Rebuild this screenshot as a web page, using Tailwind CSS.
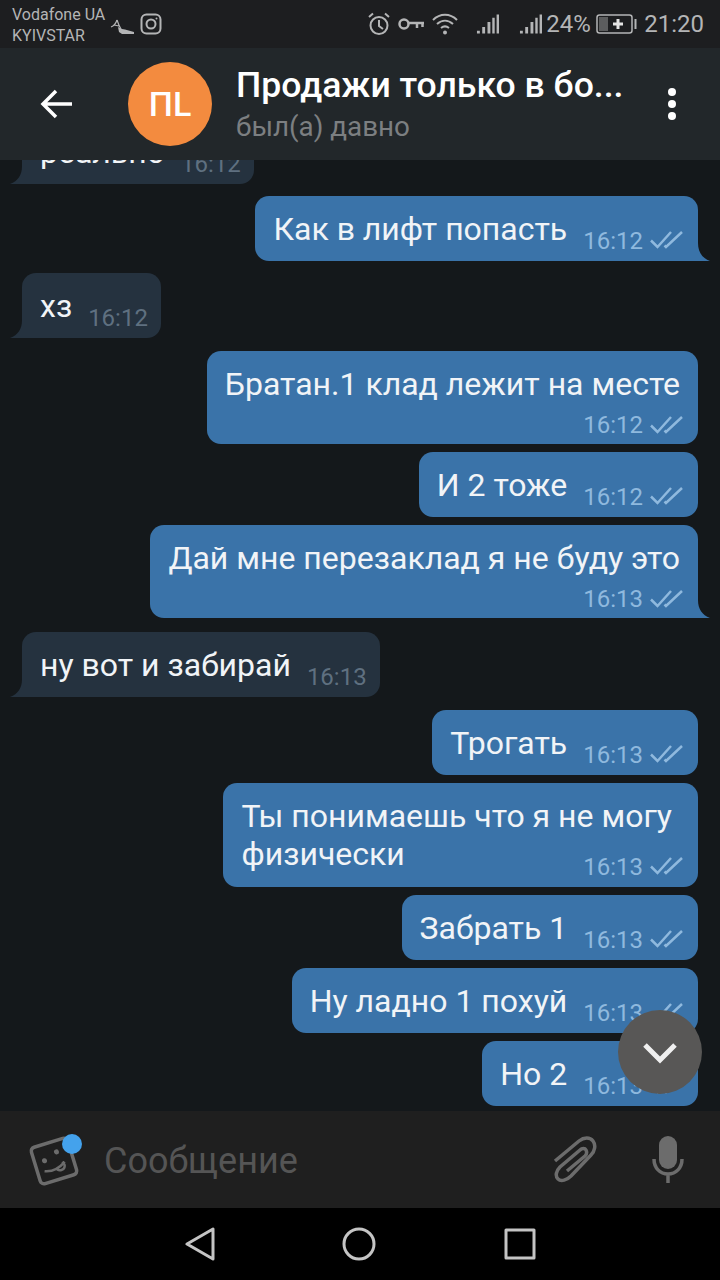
<!DOCTYPE html>
<html lang="en">

<head>
    <meta charset="UTF-8" />
    <meta name="viewport" content="width=device-width, initial-scale=1.0">
    <title>Chat</title>
    <script src="https://cdn.jsdelivr.net/npm/@tailwindcss/browser@4"></script>
</head>

<body class="bg-black">
    <!-- shared icons -->
    <svg class="hidden">
        <symbol id="checks" viewBox="0 0 33 18">
            <path d="M1 9.500l6.500 6.500L21 1M14.500 14.500l1.500 1.500L32 1" fill="none" stroke="currentColor" stroke-width="2.500" />
        </symbol>
        <symbol id="bars" viewBox="0 0 24 22">
            <path d="M1 18h3v3H1zM6.500 14h3v7h-3zM12 9h3v12h-3zM17 4.500h2.500V21H17zM21.500 1H24v20h-2.500z" fill="currentColor" />
        </symbol>
        <symbol id="tail-out" viewBox="0 0 12 18">
            <path d="M0 0C0 9 4 15 12 18H0z" fill="currentColor" />
        </symbol>
        <symbol id="tail-in" viewBox="0 0 12 18">
            <path d="M12 0C12 9 8 15 0 18H12z" fill="currentColor" />
        </symbol>
    </svg>

    <div class="w-[720px] h-[1280px] flex flex-col overflow-hidden font-['Roboto',sans-serif] bg-[#14181b]">

        <!-- Status bar -->
        <div class="h-[48px] shrink-0 bg-[#1d1e20] flex items-center text-[#b4b5b6] pl-[12px] pr-[16px]">
            <div class="text-[16px] leading-[21px] w-[96px] pt-[1px]">
                <div>Vodafone UA</div>
                <div>KYIVSTAR</div>
            </div>
            <svg class="w-[26px] h-[20px] ml-[1px] mt-[4px]" viewBox="0 0 26 20" fill="none" stroke="currentColor">
                <path d="M2 11c3-1 5-4 6-7M8 4c1 3 2 6 4 9M5 9l5 1" stroke-width="1.200" />
                <path d="M9 11l4 2 3 .500 9 2.500v2H13l-3-2z" fill="currentColor" stroke="none" />
            </svg>
            <svg class="w-[22px] h-[22px] ml-[5px]" viewBox="0 0 22 22" fill="none" stroke="currentColor" stroke-width="2">
                <rect x="1.500" y="1.500" width="19" height="19" rx="5" />
                <circle cx="11" cy="11" r="4.500" />
                <circle cx="16.500" cy="5.500" r="1" fill="currentColor" stroke="none" />
            </svg>
            <div class="flex-1"></div>
            <svg class="w-[22px] h-[24px]" viewBox="0 0 22 24" fill="none" stroke="currentColor" stroke-width="2">
                <circle cx="11" cy="13.500" r="8.500" />
                <path d="M11 8v6l4 3M1 5l4-3.500M21 5l-4-3.500" />
            </svg>
            <svg class="w-[27px] h-[14px] ml-[8px]" viewBox="0 0 27 14" fill="none" stroke="currentColor" stroke-width="2.500">
                <circle cx="6" cy="7" r="4.500" />
                <path d="M10 6h16M19 6v5M24.500 6v4" />
            </svg>
            <svg class="w-[26px] h-[22px] ml-[7px]" viewBox="0 0 26 22" fill="none" stroke="currentColor" stroke-width="2">
                <path d="M1 7c7-7 17-7 24 0M5 11c5-4.500 11-4.500 16 0M9 15c2.500-2 5.500-2 8 0" />
                <circle cx="13" cy="19.500" r="2" fill="currentColor" stroke="none" />
            </svg>
            <svg class="w-[23px] h-[22px] ml-[18px]"><use href="#bars" /></svg>
            <svg class="w-[23px] h-[22px] ml-[20px]"><use href="#bars" /></svg>
            <span class="text-[24px] leading-none ml-[4px] w-[46px]">24%</span>
            <svg class="w-[41px] h-[20px] ml-[4px]" viewBox="0 0 41 20" fill="none">
                <rect x="1" y="1" width="35" height="18" rx="2.500" stroke="currentColor" stroke-width="1.500" />
                <rect x="3" y="3" width="9" height="14" fill="#5c5d5e" />
                <path d="M17 10h10M22 5v10" stroke="#e4e4e4" stroke-width="3" />
                <rect x="38.500" y="5" width="2" height="10" fill="currentColor" />
            </svg>
            <span class="text-[24px] leading-none ml-[7px]">21:20</span>
        </div>

        <!-- Header -->
        <header class="h-[112px] shrink-0 bg-[#22272a] flex items-center pl-[40px] relative z-10">
            <svg class="w-[32px] h-[30px]" viewBox="0 0 32 30" fill="none" stroke="white" stroke-width="3.500">
                <path d="M32 15H3M16 2L3 15l13 13" />
            </svg>
            <div class="w-[84px] h-[84px] ml-[56px] pt-[1px] rounded-full bg-[#f38b3f] flex items-center justify-center text-white text-[34px] font-medium">ПL</div>
            <div class="ml-[24px] flex-1 pt-[2px]">
                <div class="text-[35.600px] leading-[42px] font-medium text-white">Продажи только в бо...</div>
                <div class="text-[27.800px] leading-[38px] mt-[2px] text-[#7c7f81]">был(а) давно</div>
            </div>
            <div class="flex flex-col gap-[4px] mr-[44px]">
                <div class="w-[8px] h-[8px] rounded-full bg-white"></div>
                <div class="w-[8px] h-[8px] rounded-full bg-white"></div>
                <div class="w-[8px] h-[8px] rounded-full bg-white"></div>
            </div>
        </header>

        <!-- Messages -->
        <main class="flex-1 min-h-0 relative overflow-hidden flex flex-col justify-end pb-[5px] text-[32px] leading-[38px] text-[#f1f4f7]">

            <div class="relative self-start ml-[22px] flex items-end bg-[#25323f] rounded-[14px] rounded-bl-none pl-[18px] pr-[13px] pt-[14px] pb-[6px]">
                <span class="mb-[7px] mr-[16px]">реально</span>
                <span class="text-[24px] leading-[28px] text-[#5f7080]">16:12</span>
                <svg class="absolute bottom-0 -left-[12px] w-[12px] h-[18px] text-[#25323f]"><use href="#tail-in" /></svg>
            </div>

            <div class="relative self-end mr-[22px] mt-[12px] flex items-end bg-[#3a73a9] rounded-[14px] rounded-br-none pl-[18px] pr-[15px] pt-[14px] pb-[6px]">
                <span class="mb-[7px] mr-[16px]">Как в лифт попасть</span>
                <span class="text-[24px] leading-[28px] text-[#8fb9de]">16:12</span>
                <svg class="w-[33px] h-[18px] ml-[7px] mb-[6px] text-[#8fb9de]"><use href="#checks" /></svg>
                <svg class="absolute bottom-0 -right-[12px] w-[12px] h-[18px] text-[#3a73a9]"><use href="#tail-out" /></svg>
            </div>

            <div class="relative self-start ml-[22px] mt-[12px] flex items-end bg-[#25323f] rounded-[14px] rounded-bl-none pl-[18px] pr-[13px] pt-[14px] pb-[6px]">
                <span class="mb-[7px] mr-[16px]">хз</span>
                <span class="text-[24px] leading-[28px] text-[#5f7080]">16:12</span>
                <svg class="absolute bottom-0 -left-[12px] w-[12px] h-[18px] text-[#25323f]"><use href="#tail-in" /></svg>
            </div>

            <div class="self-end mr-[22px] mt-[13px] flex flex-col bg-[#3a73a9] rounded-[14px] pl-[18px] pr-[18px] pt-[14px] pb-[5px]">
                <span class="mb-[8px]">Братан.1 клад лежит на месте</span>
                <div class="flex items-end justify-end -mr-[3px]">
                    <span class="text-[24px] leading-[28px] text-[#8fb9de]">16:12</span>
                    <svg class="w-[33px] h-[18px] ml-[7px] mb-[5px] text-[#8fb9de]"><use href="#checks" /></svg>
                </div>
            </div>

            <div class="self-end mr-[22px] mt-[8px] flex items-end bg-[#3a73a9] rounded-[14px] pl-[18px] pr-[15px] pt-[14px] pb-[6px]">
                <span class="mb-[7px] mr-[16px]">И 2 тоже</span>
                <span class="text-[24px] leading-[28px] text-[#8fb9de]">16:12</span>
                <svg class="w-[33px] h-[18px] ml-[7px] mb-[6px] text-[#8fb9de]"><use href="#checks" /></svg>
            </div>

            <div class="relative self-end mr-[22px] mt-[8px] flex flex-col bg-[#3a73a9] rounded-[14px] rounded-br-none pl-[18px] pr-[18px] pt-[14px] pb-[5px]">
                <span class="mb-[8px]">Дай мне перезаклад я не буду это</span>
                <div class="flex items-end justify-end -mr-[3px]">
                    <span class="text-[24px] leading-[28px] text-[#8fb9de]">16:13</span>
                    <svg class="w-[33px] h-[18px] ml-[7px] mb-[5px] text-[#8fb9de]"><use href="#checks" /></svg>
                </div>
                <svg class="absolute bottom-0 -right-[12px] w-[12px] h-[18px] text-[#3a73a9]"><use href="#tail-out" /></svg>
            </div>

            <div class="relative self-start ml-[22px] mt-[14px] flex items-end bg-[#25323f] rounded-[14px] rounded-bl-none pl-[18px] pr-[13px] pt-[14px] pb-[6px]">
                <span class="mb-[7px] mr-[16px]">ну вот и забирай</span>
                <span class="text-[24px] leading-[28px] text-[#5f7080]">16:13</span>
                <svg class="absolute bottom-0 -left-[12px] w-[12px] h-[18px] text-[#25323f]"><use href="#tail-in" /></svg>
            </div>

            <div class="self-end mr-[22px] mt-[13px] flex items-end bg-[#3a73a9] rounded-[14px] pl-[18px] pr-[15px] pt-[14px] pb-[6px]">
                <span class="mb-[7px] mr-[16px]">Трогать</span>
                <span class="text-[24px] leading-[28px] text-[#8fb9de]">16:13</span>
                <svg class="w-[33px] h-[18px] ml-[7px] mb-[6px] text-[#8fb9de]"><use href="#checks" /></svg>
            </div>

            <div class="self-end mr-[22px] mt-[8px] flex flex-col bg-[#3a73a9] rounded-[14px] pl-[18px] pr-[26px] pt-[14px] pb-[6px]">
                <span>Ты понимаешь что я не могу<br>физически</span>
                <div class="flex items-end justify-end -mr-[11px] -mt-[20px]">
                    <span class="text-[24px] leading-[28px] text-[#8fb9de]">16:13</span>
                    <svg class="w-[33px] h-[18px] ml-[7px] mb-[6px] text-[#8fb9de]"><use href="#checks" /></svg>
                </div>
            </div>

            <div class="self-end mr-[22px] mt-[8px] flex items-end bg-[#3a73a9] rounded-[14px] pl-[18px] pr-[15px] pt-[14px] pb-[6px]">
                <span class="mb-[7px] mr-[16px]">Забрать 1</span>
                <span class="text-[24px] leading-[28px] text-[#8fb9de]">16:13</span>
                <svg class="w-[33px] h-[18px] ml-[7px] mb-[6px] text-[#8fb9de]"><use href="#checks" /></svg>
            </div>

            <div class="self-end mr-[22px] mt-[8px] flex items-end bg-[#3a73a9] rounded-[14px] pl-[18px] pr-[15px] pt-[14px] pb-[6px]">
                <span class="mb-[7px] mr-[16px]">Ну ладно 1 похуй</span>
                <span class="text-[24px] leading-[28px] text-[#8fb9de]">16:13</span>
                <svg class="w-[33px] h-[18px] ml-[7px] mb-[6px] text-[#8fb9de]"><use href="#checks" /></svg>
            </div>

            <div class="self-end mr-[22px] mt-[8px] flex items-end bg-[#3a73a9] rounded-[14px] pl-[18px] pr-[15px] pt-[14px] pb-[6px]">
                <span class="mb-[7px] mr-[16px]">Но 2</span>
                <span class="text-[24px] leading-[28px] text-[#8fb9de]">16:13</span>
                <svg class="w-[33px] h-[18px] ml-[7px] mb-[6px] text-[#8fb9de]"><use href="#checks" /></svg>
            </div>

            <!-- scroll to bottom -->
            <div class="absolute right-[18px] bottom-[17px] w-[84px] h-[84px] rounded-full bg-[#585756] flex items-center justify-center">
                <svg class="w-[34px] h-[21px] mt-[2px]" viewBox="0 0 34 21" fill="none" stroke="#f0f0f0" stroke-width="5">
                    <path d="M2 2l15 15L32 2" />
                </svg>
            </div>
        </main>

        <!-- Input -->
        <div class="h-[97px] shrink-0 bg-[#1f1f1f] flex items-center pl-[28px]">
            <div class="relative w-[52px] h-[52px] mt-[2px]">
                <svg class="w-[52px] h-[52px]" viewBox="0 0 52 52" fill="none" stroke="#6c6c6c" stroke-width="3.500">
                    <g transform="rotate(-17 26 26)">
                        <rect x="7" y="7" width="38" height="38" rx="4" />
                        <circle cx="17" cy="23" r="2.500" fill="#6c6c6c" stroke="none" />
                        <circle cx="31" cy="18" r="2.500" fill="#6c6c6c" stroke="none" />
                        <path d="M14 33c7 3 14 2 22-3M26 33c1 5 8 5 9 0l-1-4" stroke-width="2.500" />
                    </g>
                </svg>
                <div class="absolute -top-[1px] right-[-2px] w-[20px] h-[20px] rounded-full bg-[#44a2ec]"></div>
            </div>
            <span class="ml-[24px] mt-[2px] text-[36px] leading-none text-[#555555]">Сообщение</span>
            <div class="flex-1"></div>
            <svg class="w-[44px] h-[48px]" viewBox="0 0 44 48" fill="none" stroke="#6c6c6c" stroke-width="3.500">
                <path d="M2 25L26 5c5-4 11-4 14 0s2 10-2 14L18 40c-4 4-10 6-13 3s-2-8 2-12L27 14c2-2 5-2 6 0s1 4-1 6L14 35" />
            </svg>
            <svg class="w-[32px] h-[48px] ml-[55px] mr-[36px]" viewBox="0 0 32 48" fill="none">
                <rect x="7" y="0" width="18" height="33" rx="9" fill="#6c6c6c" />
                <path d="M2 23c0 9 6 15 14 15s14-6 14-15M16 38v9" stroke="#6c6c6c" stroke-width="3.500" />
            </svg>
        </div>

        <!-- Navigation bar -->
        <nav class="h-[72px] shrink-0 bg-black flex items-center justify-center">
            <div class="w-[351px] flex items-center justify-between">
                <svg class="w-[30px] h-[34px]" viewBox="0 0 30 34" fill="none" stroke="#c4c4c4" stroke-width="3" stroke-linejoin="round">
                    <path d="M28 2v30L2 17z" />
                </svg>
                <svg class="w-[34px] h-[34px]" viewBox="0 0 34 34" fill="none" stroke="#c4c4c4" stroke-width="3">
                    <circle cx="17" cy="17" r="15" />
                </svg>
                <svg class="w-[32px] h-[32px]" viewBox="0 0 32 32" fill="none" stroke="#c4c4c4" stroke-width="3" stroke-linejoin="round">
                    <rect x="2" y="2" width="28" height="28" />
                </svg>
            </div>
        </nav>
    </div>
</body>

</html>
